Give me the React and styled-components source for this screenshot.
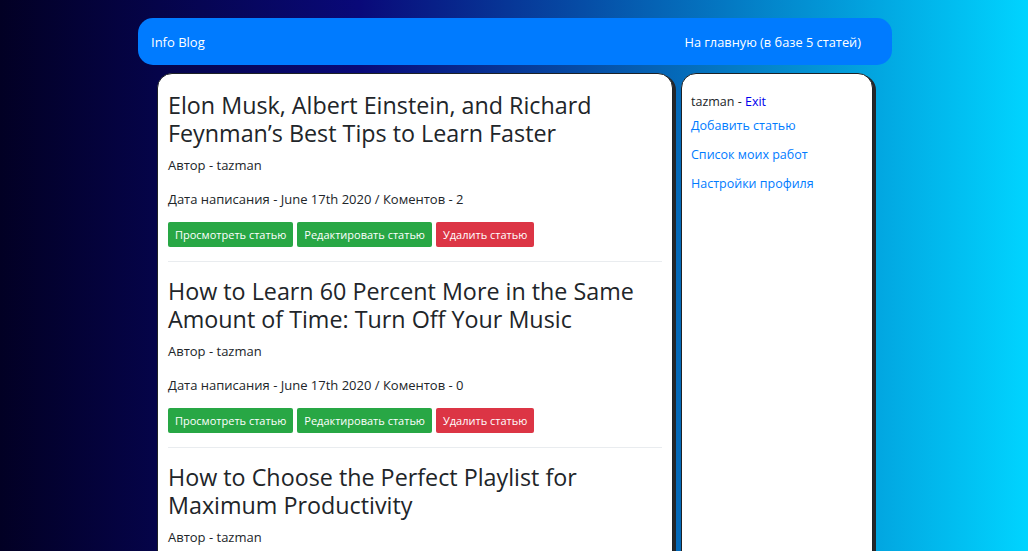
import styled, { createGlobalStyle } from "styled-components";

const GlobalStyle = createGlobalStyle`
    html, body {
        margin: 0;
        padding: 0;
        min-height: 100%;
    }
    body {
        font-family: "Open Sans", "Noto Sans", sans-serif;
        color: #212529;
        background: linear-gradient(90deg, rgba(2,0,36,1) 0%, rgba(9,9,121,1) 35%, rgba(0,212,255,1) 100%);
        background-attachment: fixed;
        min-height: 100vh;
    }
`;

const articles = [
    {
        title: "Elon Musk, Albert Einstein, and Richard Feynman’s Best Tips to Learn Faster",
        author: "tazman",
        date: "June 17th 2020",
        comments: 2,
    },
    {
        title: "How to Learn 60 Percent More in the Same Amount of Time: Turn Off Your Music",
        author: "tazman",
        date: "June 17th 2020",
        comments: 0,
    },
    {
        title: "How to Choose the Perfect Playlist for Maximum Productivity",
        author: "tazman",
        date: "June 17th 2020",
        comments: 1,
    },
    {
        title: "Why You Should Read More Books",
        author: "tazman",
        date: "June 17th 2020",
        comments: 0,
    },
];

function App() {
    return (
        <>
            <GlobalStyle />
            <Page>
                {/* navbar */}
                <Navbar>
                    <Brand href="#">Info Blog</Brand>
                    <NavLink href="#">На главную (в базе 5 статей)</NavLink>
                </Navbar>

                <Row>
                    {/* articles */}
                    <Main>
                        {articles.map((a, i) => (
                            <Article key={i}>
                                <Title>{a.title}</Title>
                                <Meta>Автор - {a.author}</Meta>
                                <Meta $gap>
                                    Дата написания - {a.date} / Коментов - {a.comments}
                                </Meta>
                                <Buttons>
                                    <Button href="#">Просмотреть статью</Button>
                                    <Button href="#">Редактировать статью</Button>
                                    <Button href="#" $danger>Удалить статью</Button>
                                </Buttons>
                            </Article>
                        ))}
                    </Main>

                    {/* sidebar */}
                    <Sidebar>
                        <User>
                            tazman - <Exit href="#">Exit</Exit>
                        </User>
                        <SideLink href="#">Добавить статью</SideLink>
                        <SideLink href="#">Список моих работ</SideLink>
                        <SideLink href="#">Настройки профиля</SideLink>
                    </Sidebar>
                </Row>
            </Page>
        </>
    );
}

export default App;

const Page = styled.div`
    width: 754px;
    margin-left: calc(50% - 376px);
    padding-top: 18px;
`;

const Navbar = styled.nav`
    height: 47px;
    background: #007bff;
    border-radius: 15px;
    display: flex;
    align-items: center;
    justify-content: space-between;
    padding: 0 31px 0 13px;
    box-sizing: border-box;
`;

const Brand = styled.a`
    color: #fff;
    font-size: 13px;
    text-decoration: none;
`;

const NavLink = styled.a`
    color: #fff;
    font-size: 12.8px;
    text-decoration: none;
`;

const Row = styled.div`
    display: flex;
    gap: 8px;
    padding: 8px 19px 0;
    align-items: stretch;
`;

const Card = styled.div`
    background: #fff;
    border: 1px solid #1d2125;
    border-radius: 15px;
    box-shadow: 3px 2px 0 #23272b;
    box-sizing: border-box;
`;

const Main = styled(Card)`
    width: 516px;
    padding: 0 10px;
`;

const Article = styled.div`
    padding: 17px 0 14px;
    border-bottom: 1px solid #e9ecef;

    & + & {
        padding-top: 15px;
    }
`;

const Title = styled.h3`
    margin: 0 0 8px;
    font-size: 23.3px;
    font-weight: 400;
    line-height: 28px;
    color: #212529;
`;

const Meta = styled.p`
    margin: ${(p) => (p.$gap ? "14px 0 13px" : "0")};
    font-size: 13px;
    line-height: 20px;
`;

const Buttons = styled.div`
    display: flex;
    gap: 4px;
`;

const Button = styled.a`
    display: inline-flex;
    align-items: center;
    height: 25px;
    padding: 0 7px;
    border-radius: 2px;
    font-size: 11px;
    color: #fff;
    text-decoration: none;
    background: ${(p) => (p.$danger ? "#dc3545" : "#28a745")};
    box-sizing: border-box;
`;

const Sidebar = styled(Card)`
    width: 192px;
    padding: 18px 9px;
    display: flex;
    flex-direction: column;
    min-height: 480px;
`;

const User = styled.div`
    font-size: 12.5px;
    line-height: 20px;
`;

const Exit = styled.a`
    color: #0000ee;
    text-decoration: none;
`;

const SideLink = styled.a`
    color: #007bff;
    font-size: 12.5px;
    line-height: 20px;
    text-decoration: none;
    margin-top: 4px;

    & + & {
        margin-top: 9px;
    }
`;
